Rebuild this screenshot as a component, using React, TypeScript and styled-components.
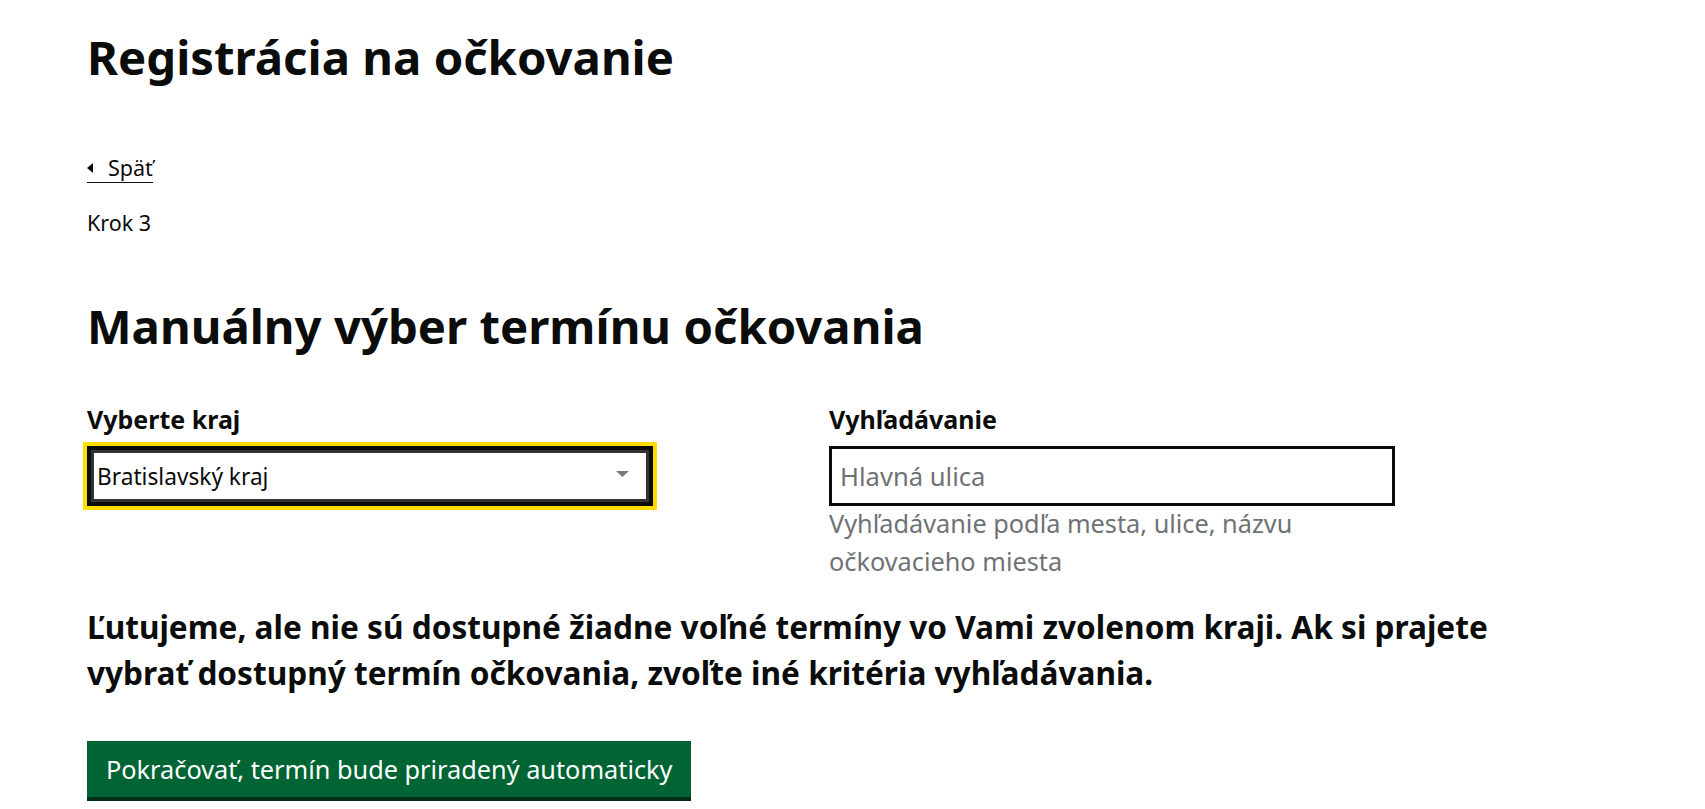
import React from "react";
import styled, { createGlobalStyle } from "styled-components";

const GlobalStyle = createGlobalStyle`
  html, body {
    margin: 0;
    padding: 0;
    background: #ffffff;
  }
  body {
    font-family: "Noto Sans", "Open Sans", Arial, sans-serif;
    color: #0b0c0c;
    -webkit-font-smoothing: antialiased;
  }
  * {
    box-sizing: border-box;
  }
`;

const regions = ["Bratislavský kraj", "Trnavský kraj", "Trenčiansky kraj", "Nitriansky kraj", "Žilinský kraj"];

const App = () => {
  const [region, setRegion] = React.useState(regions[0]);
  const [query, setQuery] = React.useState("");

  return (
    <StPage>
      <GlobalStyle />
      <StTitle>Registrácia na očkovanie</StTitle>
      <StBackLink href="#">
        <StBackArrow />
        Späť
      </StBackLink>
      <StStep>Krok 3</StStep>
      <StHeading>Manuálny výber termínu očkovania</StHeading>

      <StRow>
        <StColumn>
          <StLabel htmlFor="kraj">Vyberte kraj</StLabel>
          <StSelectWrap>
            <StSelect id="kraj" value={region} onChange={(e) => setRegion(e.target.value)}>
              {regions.map((r) => (
                <option key={r} value={r}>
                  {r}
                </option>
              ))}
            </StSelect>
            <StCaret width="13" height="6" viewBox="0 0 13 6">
              <path d="M0 0 L13 0 L6.5 6 Z" fill="#7a7a7a" />
            </StCaret>
          </StSelectWrap>
        </StColumn>
        <StColumn>
          <StLabel htmlFor="hladat">Vyhľadávanie</StLabel>
          <StInput
            id="hladat"
            placeholder="Hlavná ulica"
            value={query}
            onChange={(e) => setQuery(e.target.value)}
          />
          <StHint>Vyhľadávanie podľa mesta, ulice, názvu očkovacieho miesta</StHint>
        </StColumn>
      </StRow>

      <StNotice>
        Ľutujeme, ale nie sú dostupné žiadne voľné termíny vo Vami zvolenom kraji. Ak si prajete vybrať dostupný
        termín očkovania, zvoľte iné kritéria vyhľadávania.
      </StNotice>

      <StButton>Pokračovať, termín bude priradený automaticky</StButton>
    </StPage>
  );
};

export default App;

const StPage = styled.div`
  width: 1454px;
  margin-left: 87px;
  padding-top: 29px;
  padding-bottom: 20px;
`;

const StTitle = styled.h1`
  margin: 0;
  font-size: 47.3px;
  line-height: 56px;
  font-weight: 700;
`;

const StBackLink = styled.a`
  display: inline-flex;
  align-items: center;
  gap: 15px;
  margin-top: 69px;
  font-size: 21.5px;
  line-height: 28px;
  color: #0b0c0c;
  text-decoration: none;
  border-bottom: 1px solid #0b0c0c;
`;

const StBackArrow = styled.span`
  width: 0;
  height: 0;
  border-top: 5px solid transparent;
  border-bottom: 5px solid transparent;
  border-right: 6px solid #0b0c0c;
`;

const StStep = styled.div`
  margin-top: 26px;
  font-size: 21.5px;
  line-height: 28px;
`;

const StHeading = styled.h2`
  margin: 61px 0 0;
  font-size: 47.3px;
  line-height: 56px;
  font-weight: 700;
`;

const StRow = styled.div`
  display: grid;
  grid-template-columns: 742px 1fr;
  margin-top: 50px;
`;

const StColumn = styled.div`
  display: flex;
  flex-direction: column;
  align-items: flex-start;
`;

const StLabel = styled.label`
  font-size: 25px;
  line-height: 30px;
  font-weight: 700;
  margin-bottom: 12px;
`;

const StSelectWrap = styled.div`
  position: relative;
  width: 566px;
`;

const StSelect = styled.select`
  appearance: none;
  -webkit-appearance: none;
  display: block;
  width: 100%;
  height: 60px;
  padding: 0 40px 0 6px;
  font-family: "Noto Sans", "Open Sans", Arial, sans-serif;
  font-size: 22.7px;
  color: #0b0c0c;
  background: #ffffff;
  border: 4px solid #0b0c0c;
  border-radius: 0;
  outline: 4px solid #ffdd00;
  box-shadow: inset 0 0 0 3px #333333;
`;

const StCaret = styled.svg`
  position: absolute;
  right: 24px;
  top: 25px;
  pointer-events: none;
`;

const StInput = styled.input`
  display: block;
  width: 566px;
  height: 60px;
  padding: 0 8px;
  font-family: "Noto Sans", "Open Sans", Arial, sans-serif;
  font-size: 25.6px;
  color: #0b0c0c;
  background: #ffffff;
  border: 3px solid #0b0c0c;
  border-radius: 0;
  outline: none;

  &::placeholder {
    color: #6f7275;
  }
`;

const StHint = styled.div`
  width: 566px;
  margin-top: -2px;
  font-size: 25.3px;
  line-height: 38px;
  color: #6f7275;
`;

const StNotice = styled.h3`
  margin: 24px 0 0;
  font-size: 31.6px;
  line-height: 46px;
  font-weight: 700;
`;

const StButton = styled.button`
  display: inline-block;
  margin-top: 45px;
  padding: 14px 19px;
  font-family: "Noto Sans", "Open Sans", Arial, sans-serif;
  font-size: 25.3px;
  line-height: 28px;
  color: #ffffff;
  background: #006435;
  border: none;
  border-radius: 0;
  box-shadow: 0 4px 0 #002d18;
  cursor: pointer;
`;
